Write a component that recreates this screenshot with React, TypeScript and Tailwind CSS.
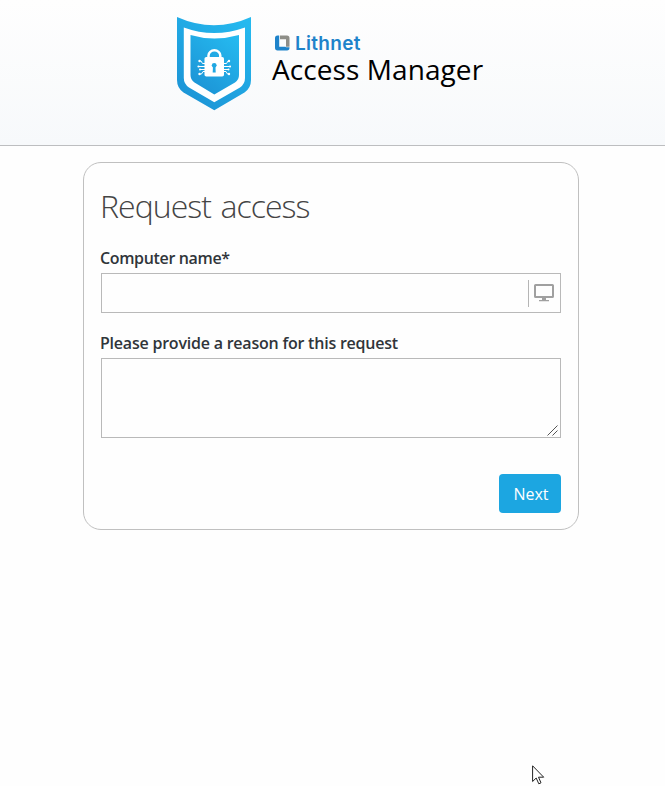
import React from "react";

function Shield() {
  return (
    <svg width="76" height="95" viewBox="176 16 76 95" className="shrink-0">
      <defs>
        <linearGradient id="shield" x1="0.85" y1="0" x2="0.2" y2="1">
          <stop offset="0" stopColor="#25b9ef" />
          <stop offset="1" stopColor="#1c93d5" />
        </linearGradient>
      </defs>
      <path d="M177 17Q214 33.500 251 17V80Q251 88 244.500 92.500L214.300 110.300L183.500 92.500Q177 88 177 80Z" fill="url(#shield)" />
      <path d="M183.800 27.500Q214 38.500 245 27.500V78Q245 84 240 87.500L214.300 102.300L189 87.500Q183.800 84 183.800 78Z" fill="#fff" />
      <path d="M190.500 35Q214 42 239 35V75Q239 80 235 82.500L214.300 94.500L194.500 82.500Q190.500 80 190.500 75Z" fill="url(#shield)" />
      <path d="M208.500 58V55.500a5.900 5.200 0 0 1 11.800 0V58" fill="none" stroke="#fff" strokeWidth="2.500" />
      <rect x="204.500" y="57" width="19.500" height="19.500" rx="1.800" fill="#fff" />
      <circle cx="214.200" cy="65.300" r="2.400" fill="#1fa7e2" />
      <path d="M213 66h2.400l.3 6.500h-3Z" fill="#1fa7e2" />
      <g fill="none" stroke="#fff" strokeWidth="1">
        <path d="M205 63.500h-2.500l-1.500-2.500h-2M205 66.500h-7M205 69.500h-5M205 71.500h-2l-1.500 2.500h-2.500M224 63.500h2.500l1.500-2.500h2M224 66.500h7M224 69.500h5M224 71.500h2l1.500 2.500h2.500" />
      </g>
      <g fill="#fff">
        <circle cx="199.500" cy="61" r="1.200" /><circle cx="198.500" cy="66.500" r="1.100" /><circle cx="200" cy="69.500" r="1" /><circle cx="199.500" cy="74" r="1.200" />
        <circle cx="229" cy="61" r="1.200" /><circle cx="230" cy="66.500" r="1.100" /><circle cx="228.500" cy="69.500" r="1" /><circle cx="229" cy="74" r="1.200" />
      </g>
    </svg>
  );
}

export default function App() {
  return (
    <div className="relative h-[786px] w-full overflow-hidden bg-[#fefefe] font-['Open_Sans','Noto_Sans',sans-serif] text-[#212529]">
      <header className="flex h-[146px] items-start border-b border-[#bdbec0] bg-linear-to-b from-[#fefefe] to-[#f7f9fb] pl-[176px] pt-4">
        <Shield />
        <div className="ml-[21px] pt-[19px]">
          <div className="flex h-[18px] items-start pl-[2px]">
            <svg width="15" height="16" viewBox="0 0 15 15" preserveAspectRatio="none" className="shrink-0">
              <path d="M5 .5H12Q14.500 .5 14.500 3V11H11V4H5Z" fill="#8e8e88" />
              <path d="M4.200 .5H2.500Q0 .5 0 3V12Q0 14.500 2.500 14.500H12Q14.500 14.500 14.500 12V11.500H11L10.500 11H4.200Z" fill="#1e83ca" />
            </svg>
            <span className="ml-[5px] whitespace-nowrap font-['Inter',sans-serif] text-[19px] font-semibold leading-[18px] tracking-[0.3px] text-[#1e83ca]">Lithnet</span>
          </div>
          <div className="-ml-px whitespace-nowrap text-[28px] leading-[32px] tracking-[0.08px] text-black">Access Manager</div>
        </div>
      </header>

      <main className="ml-[83px] mt-4 h-[368px] w-[496px] rounded-[18px] border border-[#c0c0c0] px-[17px] pt-[22px]">
        <h1 className="-ml-px h-[42px] whitespace-nowrap text-[32px] font-light leading-[42px] tracking-[-0.95px] [word-spacing:2px] text-[#444]">Request access</h1>
        <label className="-ml-px mt-[19px] block h-6 whitespace-nowrap text-[16px] font-semibold leading-6 tracking-[-0.35px] text-[#30353a]">Computer name*</label>
        <div className="mt-[3px] flex h-10 items-center justify-end border border-[#b9b9b9]">
          <div className="h-[27px] w-px bg-[#b5b5b5]" />
          <svg width="20" height="18" viewBox="0 0 20 18" className="ml-[5px] mr-[6px]">
            <rect x="1" y="1" width="18" height="12" rx=".6" fill="#fefefe" stroke="#a0a0a0" strokeWidth="2" />
            <path d="M8 14h4v2h3v1.200H5V16h3Z" fill="#a0a0a0" />
          </svg>
        </div>
        <label className="-ml-px mt-[18px] block h-6 whitespace-nowrap text-[16px] font-semibold leading-6 tracking-[-0.22px] text-[#30353a]">Please provide a reason for this request</label>
        <div className="mt-[3px] flex h-20 items-end justify-end border border-[#b9b9b9] p-[2px] pb-px">
          <svg width="11" height="11" viewBox="0 0 11 11">
            <path d="M.5 10.500l10-10M5.500 10.500l5-5" stroke="#555" strokeWidth="1" />
          </svg>
        </div>
        <div className="mt-9 flex justify-end">
          <button className="h-[39px] w-[62px] rounded-[4px] bg-[#1ca6e1] pl-[2px] text-[16px] leading-6 text-white">Next</button>
        </div>
      </main>

      <svg width="14" height="21" viewBox="0 0 14 21" className="absolute left-[532px] top-[765px]">
        <path d="M.6 .8V16.500L4.200 13L6.800 18.800L9 17.800L6.500 12.200H11.700Z" fill="#fff" stroke="#222" strokeWidth="1" />
      </svg>
    </div>
  );
}
